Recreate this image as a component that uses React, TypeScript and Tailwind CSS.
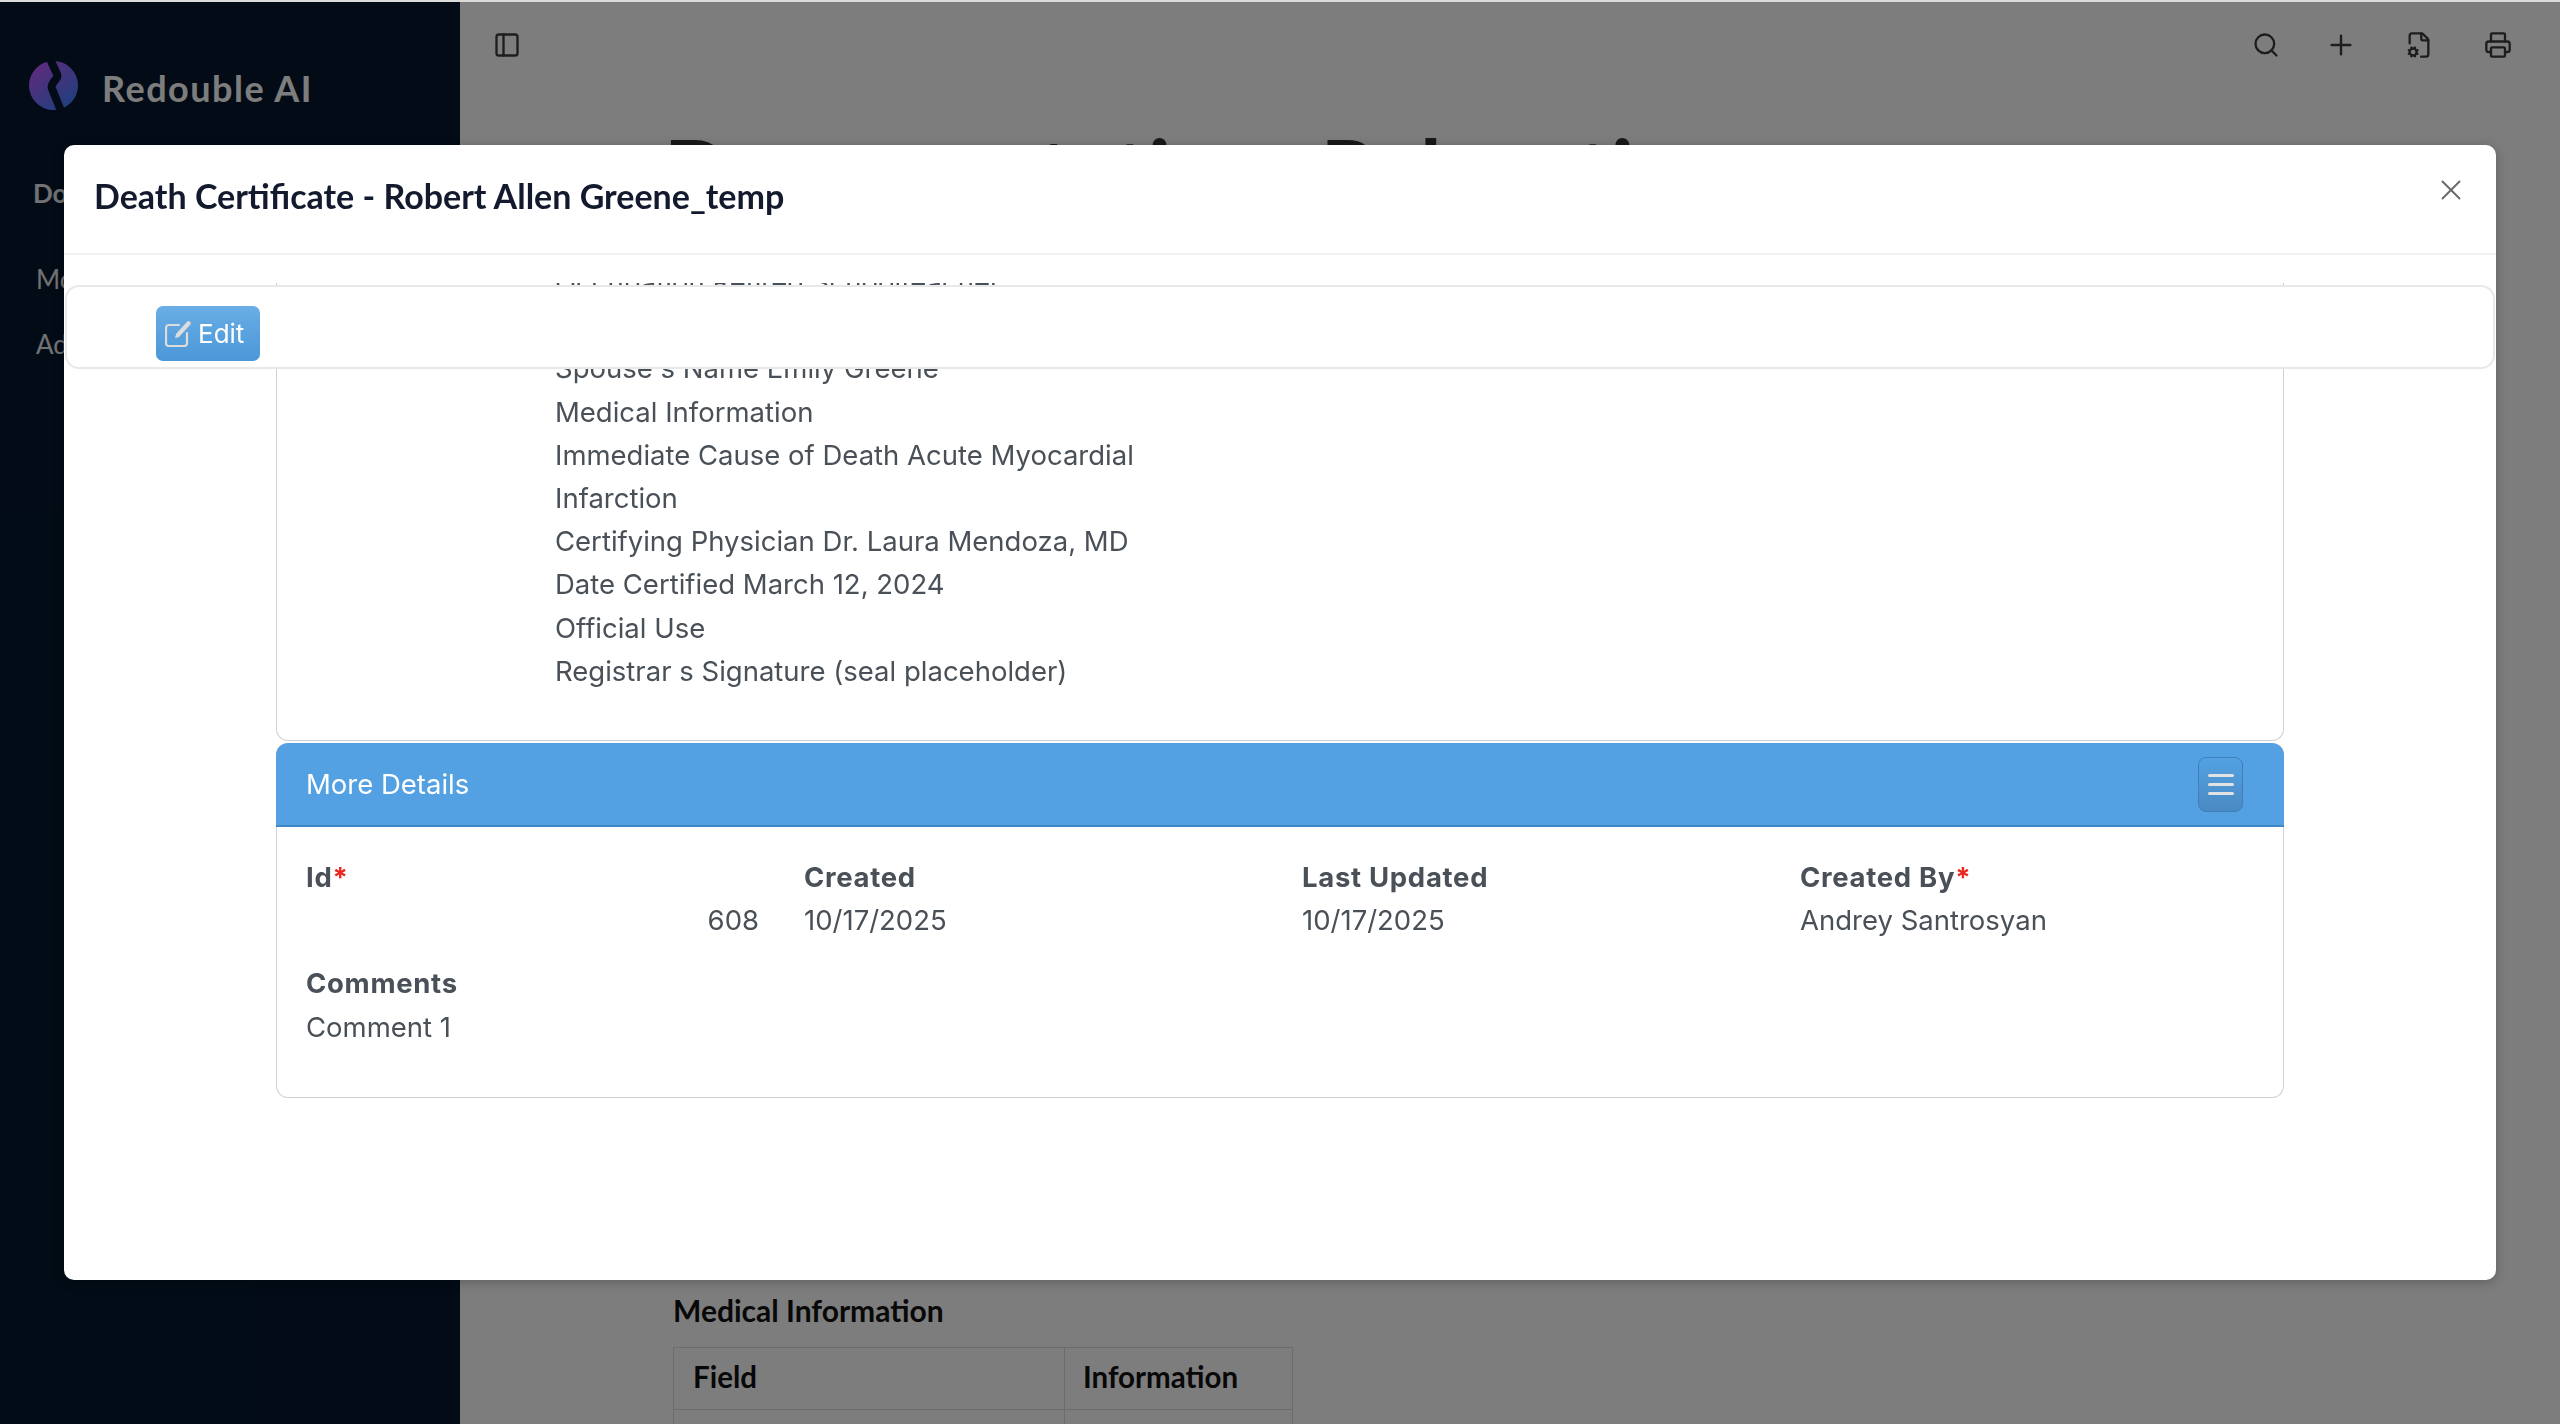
import React from "react";
import { FileCog, PanelLeft, Plus, Printer, Search, X } from "lucide-react";

const certificateLines = [
  "Occupation Retired Schoolteacher",
  "Marital Status Married",
  "Spouse s Name Emily Greene",
  "Medical Information",
  "Immediate Cause of Death Acute Myocardial",
  "Infarction",
  "Certifying Physician Dr. Laura Mendoza, MD",
  "Date Certified March 12, 2024",
  "Official Use",
  "Registrar s Signature (seal placeholder)",
];

const details = [
  { label: "Id", value: "608", required: true, right: true },
  { label: "Created", value: "10/17/2025" },
  { label: "Last Updated", value: "10/17/2025" },
  { label: "Created By", value: "Andrey Santrosyan", required: true },
];

const Logo = () => (
  <svg width="49" height="49" viewBox="0 0 49 49" fill="none">
    <defs>
      <linearGradient id="logoFill" x1="0.2" y1="0.1" x2="0.8" y2="0.9">
        <stop offset="0" stopColor="#bb5aff" />
        <stop offset="1" stopColor="#4480ff" />
      </linearGradient>
    </defs>
    <circle cx="24.5" cy="24.5" r="24.5" fill="url(#logoFill)" />
    <path d="M21.5 -1 L27.5 12 Q29.5 15 27 18 L24 22 Q21.5 25 23.5 29 L32 50" stroke="#05182d" strokeWidth="8" />
  </svg>
);

const EditIcon = () => (
  <svg width="27" height="27" viewBox="0 0 27 27" fill="none" className="shrink-0">
    <path
      d="M14 5H4a3 3 0 0 0-3 3v15a3 3 0 0 0 3 3h15a3 3 0 0 0 3-3V13"
      stroke="#dcdcdc"
      strokeWidth="2.2"
      strokeLinecap="round"
    />
    <path d="M10 18l1.2-4.2L22 1.8a2 2 0 0 1 3.2 3L14 17z" fill="#dcdcdc" />
  </svg>
);

const Sidebar = () => (
  <aside className="w-[460px] shrink-0 bg-[#05182d] text-white font-['Lato',sans-serif]">
    <div className="flex items-center gap-[24px] pl-[29px] pt-[58px]">
      <Logo />
      <span className="relative top-[3px] text-[36px] font-bold tracking-[1.5px] leading-[50px] text-white">Redouble AI</span>
    </div>
    <div className="pl-[33px] mt-[65px] text-[26px] font-bold leading-[36px] text-white/90">Documents</div>
    <div className="pl-[36px] mt-[50px] text-[26px] leading-[36px] text-white/90">Models</div>
    <div className="pl-[36px] mt-[29px] text-[26px] leading-[36px] text-white/90">Admin</div>
  </aside>
);

const BackgroundPage = () => (
  <main className="flex-1 bg-white text-[#3c3c3c] overflow-hidden">
    <div className="h-[28px] flex items-center justify-between pl-[33px] pr-[48px] mt-[29px]">
      <PanelLeft size={28} strokeWidth={2} />
      <div className="flex items-center gap-[48px]">
        <Search size={28} strokeWidth={2} />
        <Plus size={32} strokeWidth={1.8} className="-ml-[3px]" />
        <FileCog size={28} strokeWidth={2} />
        <Printer size={28} strokeWidth={2} className="ml-[3px]" />
      </div>
    </div>
    <div className="pl-[204px] font-['Lato',sans-serif]">
      <h1 className="mt-[58px] h-[1173px] text-[87px] leading-[104px] font-bold text-[#333] whitespace-nowrap [word-spacing:30px]">
        Documentation Relocation
      </h1>
      <div className="pl-[9px]">
        <h3 className="text-[30px] leading-[40px] font-bold text-[#111]">Medical Information</h3>
        <table className="mt-[17px] w-[620px] table-fixed border-collapse border border-[#ddd] text-[29.5px] font-bold text-[#111]">
          <tbody>
            <tr className="h-[62px]">
              <td className="w-[391px] border border-[#ddd] pl-[19px] pb-[3px]">Field</td>
              <td className="border border-[#ddd] pl-[18px] pb-[3px]">Information</td>
            </tr>
            <tr className="h-[62px]">
              <td className="border border-[#ddd]"></td>
              <td className="border border-[#ddd]"></td>
            </tr>
          </tbody>
        </table>
      </div>
    </div>
  </main>
);

const MoreDetails = () => (
  <section className="mt-[2px] rounded-[12px] border border-[#d0d0d0] border-t-0 h-[355px]">
    <div className="h-[84px] -mx-px flex items-center justify-between pl-[30px] pr-[41px] rounded-t-[12px] bg-[#53a1e2] border-b-2 border-[#3f86c6] text-white">
      <span className="pt-[2px]">More Details</span>
      <button className="w-[45px] h-[55px] rounded-[8px] border border-[#3f80bc] bg-gradient-to-b from-[#53a1e2] to-[#4a8ac3] flex flex-col items-center justify-center gap-[6px]">
        <span className="w-[26px] h-[3px] rounded-full bg-[#e2e2e2]" />
        <span className="w-[26px] h-[3px] rounded-full bg-[#e2e2e2]" />
        <span className="w-[26px] h-[3px] rounded-full bg-[#e2e2e2]" />
      </button>
    </div>
    <div className="pt-[29px] grid grid-cols-[498px_498px_498px_1fr]">
      {details.map((d) => (
        <div key={d.label} className="pl-[29px] first:pr-[16px]">
          <div className="font-bold tracking-[0.7px]">
            {d.label}
            {d.required && <span className="text-[#e8281e]">*</span>}
          </div>
          <div className={d.right ? "text-right" : ""}>{d.value}</div>
        </div>
      ))}
    </div>
    <div className="pl-[29px] mt-[20px]">
      <div className="font-bold tracking-[0.7px]">Comments</div>
      <div>Comment 1</div>
    </div>
  </section>
);

const Modal = () => (
  <div className="fixed left-[64px] top-[145px] w-[2432px] h-[1135px] rounded-[10px] bg-white flex flex-col shadow-[0_2px_12px_rgba(0,0,0,0.25)]">
    <div className="h-[110px] shrink-0 flex justify-between pl-[30px] pr-[28px] border-b-2 border-[#f0f0f0]">
      <h2 className="mt-[26px] text-[34px] leading-[50px] font-bold text-[#141a2e] font-['Lato',sans-serif]">
        Death Certificate - Robert Allen Greene_temp
      </h2>
      <X size={34} strokeWidth={1.4} className="mt-[28px] text-[#6b6b6b]" />
    </div>

    <div className="flex-1 min-h-0 px-[212px] pt-[28px] font-['Inter',sans-serif] text-[27.5px] leading-[43.2px] text-[#495057]">
      <div className="h-full overflow-hidden">
        <section className="-mt-[22px] h-[480px] rounded-b-[12px] border border-t-0 border-[#d0d0d0] pl-[278px]">
          {certificateLines.map((line) => (
            <div key={line}>{line}</div>
          ))}
        </section>
        <MoreDetails />
      </div>
    </div>

    {/* sticky toolbar floats over the scrolled form */}
    <div className="absolute left-px right-px top-[140px] h-[84px] rounded-[14px] border-2 border-[#e8e8e8] bg-white pl-[89px] pt-[19px]">
      <button className="w-[104px] h-[55px] rounded-[7px] bg-gradient-to-b from-[#69aee6] to-[#4b97d8] flex items-center gap-[6px] pl-[9px] text-white text-[26px] font-['Inter',sans-serif]">
        <EditIcon />
        Edit
      </button>
    </div>
  </div>
);

const App = () => {
  return (
    <div className="h-screen overflow-hidden bg-[#d9dcd9]">
      <div className="relative mt-[2px] h-[1422px] flex overflow-hidden">
        <Sidebar />
        <BackgroundPage />
        <div className="absolute inset-0 bg-black/[0.51]" />
      </div>
      <Modal />
    </div>
  );
};

export default App;
